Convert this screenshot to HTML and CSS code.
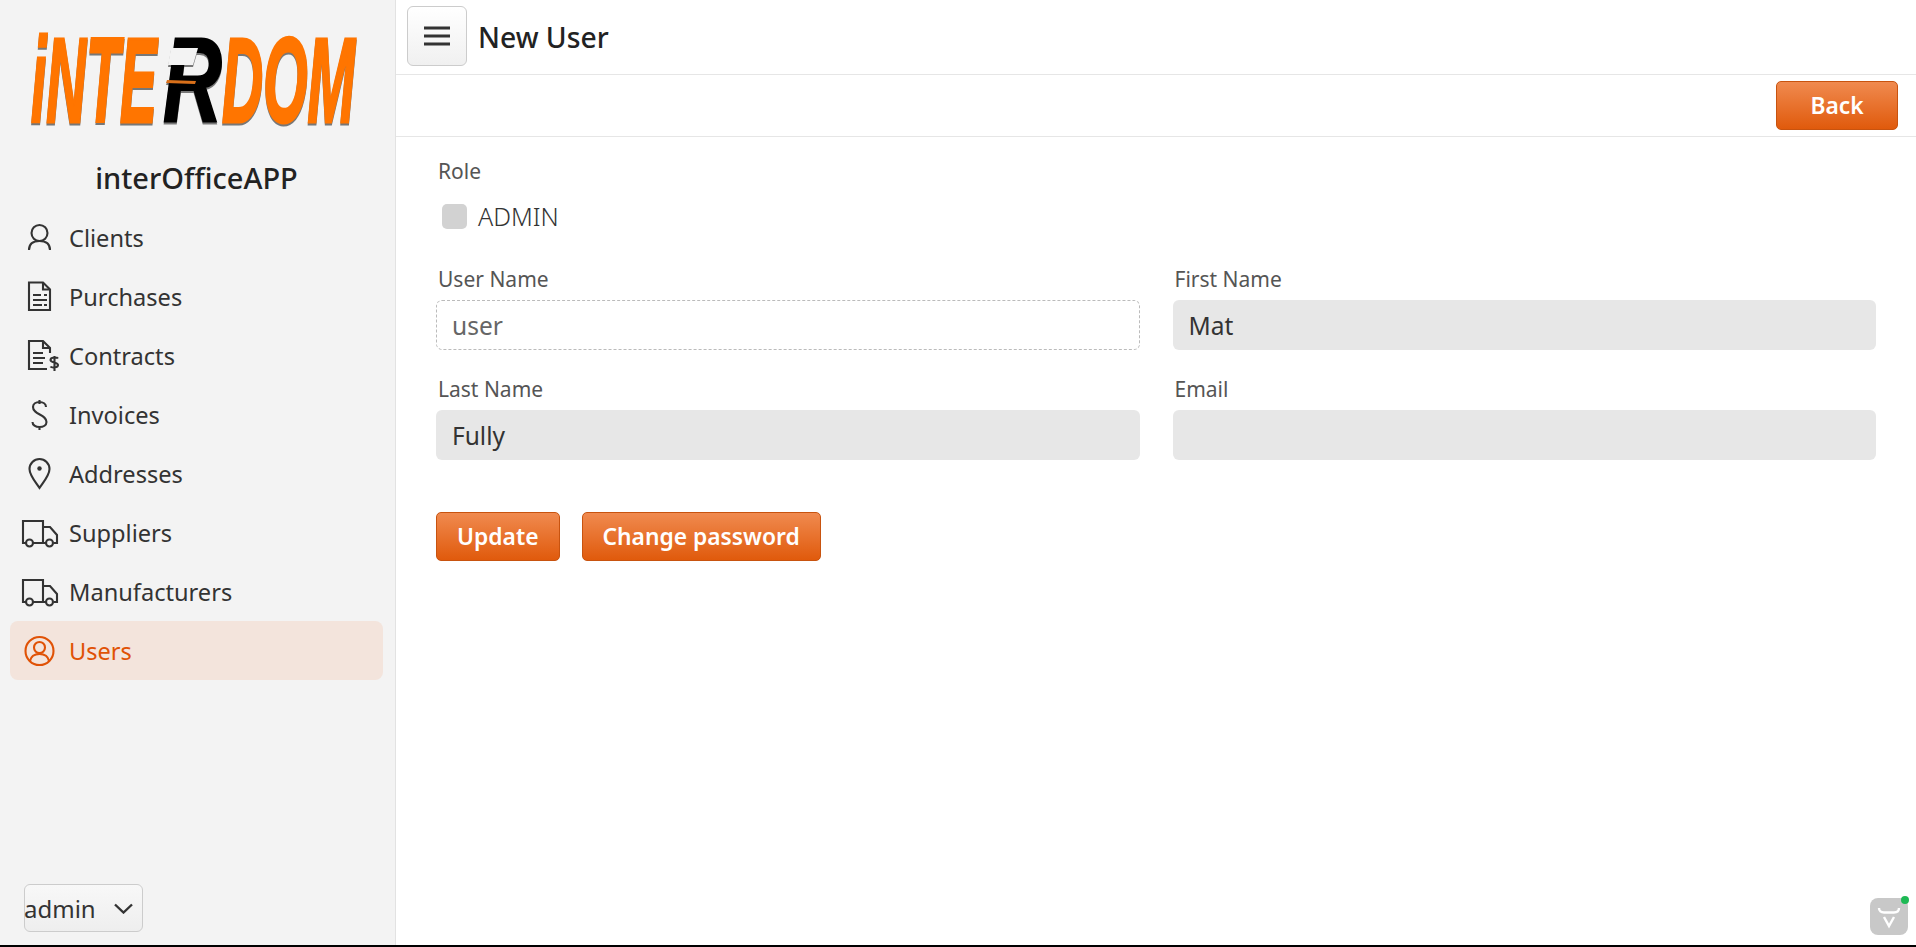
FILE: index.html
```html
<!DOCTYPE html>
<html lang="en">
<head>
  <meta charset="UTF-8">
  <meta name="viewport" content="width=device-width, initial-scale=1.0">
  <title>New User</title>
  <link rel="stylesheet" href="styles.css">
</head>
<body>
  <div class="app">
    <aside class="sidebar">
      <div class="logo">
        <svg class="logo-art" width="350" height="157" viewBox="0 0 350 157">
          <g transform="translate(0 28)">
            <text class="logo-orange" transform="translate(9 94) scale(.46 1)">iNTE</text>
            <text class="logo-black" transform="translate(141 94) scale(.68 1)">R</text>
            <text class="logo-orange" transform="translate(200 94) scale(.475 1)">DOM</text>
            <!-- cuts that turn the plain R into the logo's open R -->
            <polygon class="logo-cut" points="149,20 176,20 171,37 146,37"/>
            <polygon class="logo-line" points="145,52 174,53 173,56 144,55"/>
          </g>
        </svg>
      </div>
      <div class="app-name">interOfficeAPP</div>

      <nav class="nav">
        <a class="nav-item">
          <svg class="nav-icon" viewBox="0 0 40 40"><circle cx="19.500" cy="15" r="8"/><path d="M9 32c0-6 4-9 10.500-9S30 26 30 32"/></svg>
          <span>Clients</span>
        </a>
        <a class="nav-item">
          <svg class="nav-icon" viewBox="0 0 40 40"><path d="M9 5.500h14l7 7V33H9z"/><path d="M23 5.500v7h7"/><path d="M13 18h8M13 23h14M13 28h9M24 28h3M24 18h3"/></svg>
          <span>Purchases</span>
        </a>
        <a class="nav-item">
          <svg class="nav-icon" viewBox="0 0 40 40"><path d="M30 17v-5l-7-7H9v28h18"/><path d="M23 5v7h7"/><path d="M13 17h10M13 22h12M13 27h10"/><path d="M38 22.500c-1-1.500-7.500-1.500-7.500 1.500 0 3 7.500 2 7.500 5 0 3-6.500 3-7.500 1.500M34.500 20v15"/></svg>
          <span>Contracts</span>
        </a>
        <a class="nav-item">
          <svg class="nav-icon" viewBox="0 0 40 40"><path d="M26 12c0-3-3-5-6.500-5S13 9 13 12c0 8 13.500 7 13.500 15 0 3-3 5-7 5s-7-2-7-5M19.500 5v4M19.500 31v4"/></svg>
          <span>Invoices</span>
        </a>
        <a class="nav-item">
          <svg class="nav-icon" viewBox="0 0 40 40"><path d="M19.500 34C14 26 9.500 21 9.500 15a10 10 0 0 1 20 0c0 6-4.500 11-10 19z"/><circle class="dot" cx="19.500" cy="14.500" r="2.200"/></svg>
          <span>Addresses</span>
        </a>
        <a class="nav-item">
          <svg class="nav-icon" viewBox="0 0 40 40"><path d="M6 30H3V8h20v22H13M23 14h7l7 8v8h-3M23 30h3"/><circle cx="9.500" cy="30" r="3.500"/><circle cx="29.500" cy="30" r="3.500"/></svg>
          <span>Suppliers</span>
        </a>
        <a class="nav-item">
          <svg class="nav-icon" viewBox="0 0 40 40"><path d="M6 30H3V8h20v22H13M23 14h7l7 8v8h-3M23 30h3"/><circle cx="9.500" cy="30" r="3.500"/><circle cx="29.500" cy="30" r="3.500"/></svg>
          <span>Manufacturers</span>
        </a>
        <a class="nav-item active">
          <svg class="nav-icon" viewBox="0 0 40 40"><circle cx="19.500" cy="20" r="14"/><circle cx="19.500" cy="16.500" r="5.500"/><path d="M10 30c1-5 5-7 9.500-7s8.500 2 9.500 7"/></svg>
          <span>Users</span>
        </a>
      </nav>

      <div class="user-select">
        <span class="user-select-text">admin</span>
        <svg class="chevron" width="19" height="11" viewBox="0 0 19 11"><path d="M1 1.500l8.500 8 8.500-8"/></svg>
      </div>
    </aside>

    <main class="main">
      <header class="topbar">
        <button class="menu-btn" type="button">
          <svg width="26" height="20" viewBox="0 0 26 20"><path d="M0 2h26M0 10h26M0 18h26"/></svg>
        </button>
        <h1 class="page-title">New User</h1>
      </header>

      <div class="actionbar">
        <button class="btn btn-back" type="button">Back</button>
      </div>

      <form class="user-form">
        <div class="role-label">Role</div>
        <label class="check-row">
          <span class="check-box"></span>
          <span class="check-text">ADMIN</span>
        </label>

        <div class="form-grid">
          <div class="field">
            <label for="userName">User Name</label>
            <input class="input input-edit" id="userName" type="text" value="user">
          </div>
          <div class="field">
            <label for="firstName">First Name</label>
            <input class="input" id="firstName" type="text" value="Mat">
          </div>
          <div class="field">
            <label for="lastName">Last Name</label>
            <input class="input" id="lastName" type="text" value="Fully">
          </div>
          <div class="field">
            <label for="email">Email</label>
            <input class="input" id="email" type="text">
          </div>
        </div>

        <div class="form-actions">
          <button class="btn" type="button">Update</button>
          <button class="btn" type="button">Change password</button>
        </div>
      </form>
    </main>
  </div>

  <div class="widget">
    <svg width="38" height="37" viewBox="0 0 38 37"><path d="M9 10c0 3 2 4.500 5 4.500h10c3 0 5-1.500 5-4.500M14 19l5 9 5-9"/></svg>
    <span class="widget-dot"></span>
  </div>
</body>
</html>
```

FILE: styles.css
```css
* {
  box-sizing: border-box;
}
body {
  margin: 0;
  background: #000;
  font-family: "Noto Sans", Arial, sans-serif;
  color: #333;
}
.app {
  display: flex;
  height: 945px;
  overflow: hidden;
}
.sidebar {
  display: flex;
  flex-direction: column;
  width: 396px;
  flex-shrink: 0;
  background: #f3f3f3;
  border-right: 1px solid #e2e2e2;
}
.logo {
  height: 157px;
  padding-left: 22px;
}
.logo-art {
  display: block;
  filter: drop-shadow(0 2px 0 #777);
}
.logo-art text {
  font-family: "Liberation Sans", Arial, sans-serif;
  font-size: 120px;
  font-weight: bold;
  font-style: italic;
}
.logo-orange {
  fill: #ff7500;
  stroke: #ff7500;
  stroke-width: 3px;
}
.logo-black {
  fill: #000;
  stroke: #000;
  stroke-width: 2px;
}
.logo-cut {
  fill: #f3f3f3;
}
.logo-line {
  fill: #d9701a;
}
.app-name {
  height: 51px;
  line-height: 42px;
  padding-right: 2px;
  text-align: center;
  font-size: 29px;
  font-weight: 500;
  color: #222;
}
.nav {
  display: flex;
  flex-direction: column;
  padding: 0 12px 0 10px;
}
.nav-item {
  display: flex;
  align-items: center;
  gap: 10px;
  height: 59px;
  padding-left: 10px;
  border-radius: 8px;
  font-size: 23.6px;
  color: #333;
}
.nav-item span {
  margin-left: -1px;
}
.nav-icon {
  width: 40px;
  height: 40px;
  flex-shrink: 0;
  fill: none;
  stroke: currentColor;
  stroke-width: 2.1;
}
.nav-icon .dot {
  fill: currentColor;
  stroke: none;
}
.nav-item.active {
  background: #f3e4dc;
  color: #e05206;
}
.user-select {
  display: flex;
  align-items: center;
  justify-content: space-between;
  width: 119px;
  height: 48px;
  margin: auto 0 13px 24px;
  padding-right: 9px;
  border: 1px solid #ccc;
  border-radius: 6px;
  background: linear-gradient(#f8f8f8, #eeeeee);
  font-size: 24px;
}
.user-select-text {
  margin-left: -1px;
}
.chevron path {
  fill: none;
  stroke: #333;
  stroke-width: 2.4;
}
.main {
  flex: 1;
  background: #fff;
}
.topbar {
  display: flex;
  align-items: center;
  gap: 11px;
  height: 75px;
  padding: 0 0 3px 11px;
  border-bottom: 1px solid #e6e6e6;
}
.menu-btn {
  display: flex;
  align-items: center;
  justify-content: center;
  width: 60px;
  height: 60px;
  padding: 0;
  border: 1px solid #ccc;
  border-radius: 6px;
  background: linear-gradient(#fff, #f0f0f0);
}
.menu-btn path {
  stroke: #333;
  stroke-width: 3;
}
.page-title {
  margin: 3px 0 0;
  font-size: 28.3px;
  font-weight: 500;
  color: #222;
}
.actionbar {
  display: flex;
  justify-content: flex-end;
  align-items: center;
  height: 62px;
  padding-right: 18px;
  border-bottom: 1px solid #e6e6e6;
}
.btn {
  height: 49px;
  padding: 0 20px;
  border: 1px solid #c8530f;
  border-radius: 5px;
  background: linear-gradient(#f08a4f, #e05a0c);
  color: #fff;
  font-family: inherit;
  font-size: 22.8px;
  font-weight: 600;
}
.btn-back {
  width: 122px;
}
.user-form {
  padding: 20px 40px 0;
}
.role-label {
  height: 28px;
  line-height: 28px;
  padding-left: 2px;
  font-size: 21px;
  color: #555;
}
.check-row {
  display: flex;
  align-items: center;
  gap: 11px;
  height: 25px;
  margin: 19px 0 36px 6px;
  font-size: 25px;
  font-weight: 300;
}
.check-text {
  margin-top: -2px;
}
.check-box {
  width: 25px;
  height: 25px;
  border-radius: 5px;
  background: #d2d2d2;
}
.form-grid {
  display: grid;
  grid-template-columns: 1fr 1fr;
  gap: 25px 33px;
}
.field label {
  display: block;
  height: 28px;
  line-height: 28px;
  margin-bottom: 7px;
  padding-left: 2px;
  font-size: 21px;
  color: #555;
}
.input {
  display: block;
  width: 100%;
  height: 50px;
  padding: 0 16px;
  border: 0;
  border-radius: 6px;
  background: #e7e7e7;
  font-family: inherit;
  font-size: 24.500px;
  color: #333;
}
.input-edit {
  padding: 0 15px;
  border: 1px dashed #bbb;
  background: #fff;
  color: #666;
}
.form-actions {
  display: flex;
  gap: 22px;
  margin-top: 52px;
}
.widget {
  position: fixed;
  left: 1870px;
  top: 898px;
  width: 38px;
  height: 37px;
  border-radius: 8px;
  background: #c8c8c8;
}
.widget svg {
  display: block;
}
.widget path {
  fill: none;
  stroke: #fff;
  stroke-width: 2.400;
}
.widget-dot {
  position: absolute;
  top: -2px;
  right: -1px;
  width: 8px;
  height: 8px;
  border-radius: 50%;
  background: #1db954;
}
```
